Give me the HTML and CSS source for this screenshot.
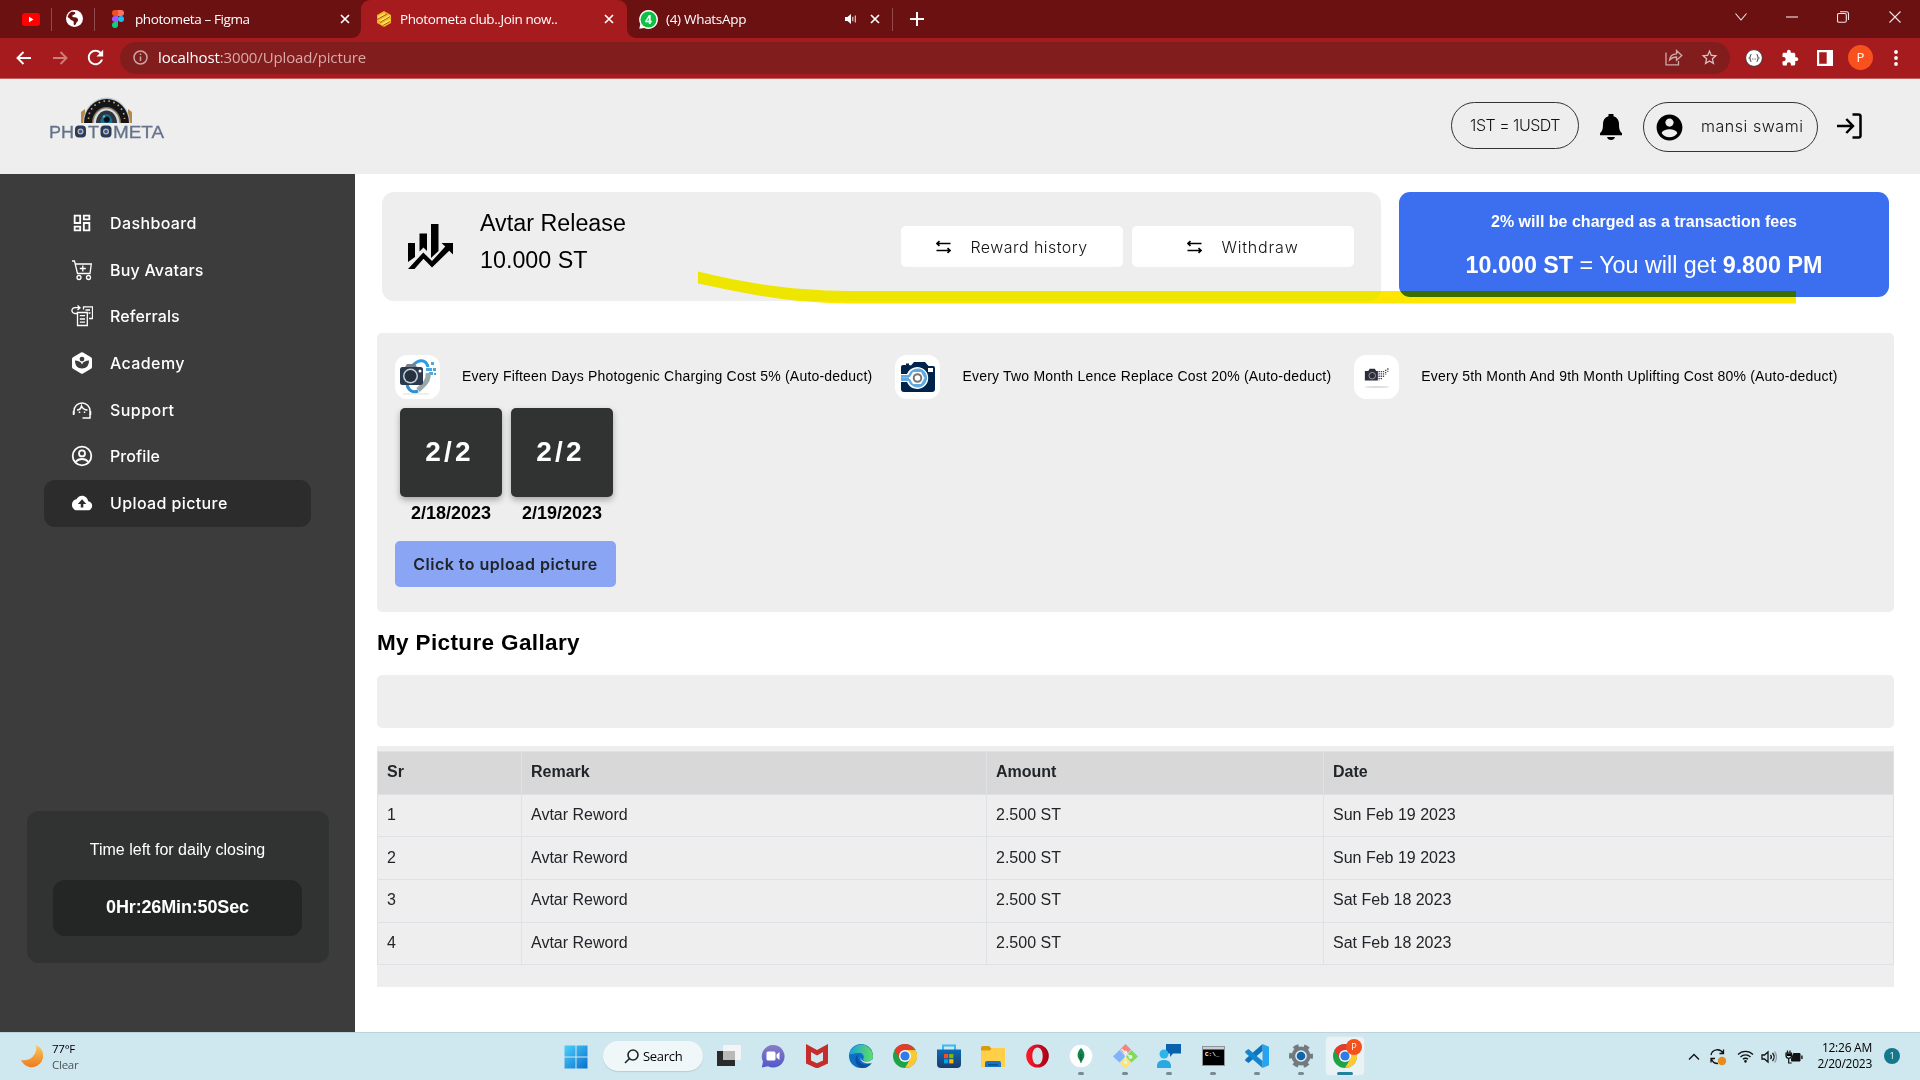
FILE: index.html
```
<!DOCTYPE html>
<html lang="en">
<head>
<meta charset="utf-8">
<title>Photometa club..Join now..</title>
<link rel="stylesheet" href="styles.css">
</head>
<body>
<div class="tabstrip">
  <div class="tabs-left">
    <svg class="pin-yt" width="18" height="13" viewBox="0 0 18 13"><rect width="18" height="13" rx="3" fill="#f00"/><path d="M7 3.8v5.4l4.600-2.700z" fill="#fff"/></svg>
    <i class="sep"></i>
    <svg class="pin-globe" width="17" height="17" viewBox="0 0 24 24"><circle cx="12" cy="12" r="12" fill="#fff"/><path d="M8 2.500c3 0 6 .5 5 2.500s-3.500 1.500-4 3 1 2 3.500 2.300 4.500 1.500 4.500 3.700-2 2.500-2.500 4.500-1.500 3-2.700 3-.8-3.500-1-5S7 14.500 6 13 3 11 2.500 10 5 3 8 2.500z" fill="#6c1112"/></svg>
    <i class="sep sep2"></i>
    <svg class="figma" width="12" height="18" viewBox="0 0 12 18"><path d="M3 0h3v6H3a3 3 0 0 1 0-6z" fill="#f24e1e"/><path d="M6 0h3a3 3 0 0 1 0 6H6z" fill="#ff7262"/><path d="M3 6h3v6H3a3 3 0 0 1 0-6z" fill="#a259ff"/><circle cx="9" cy="9" r="3" fill="#1abcfe"/><path d="M3 12h3v3a3 3 0 1 1-3-3z" fill="#0acf83"/></svg>
    <span class="tab-title t-figma">photometa – Figma</span>
    <svg class="tab-x" width="10" height="10" viewBox="0 0 10 10"><path d="M1 1l8 8M9 1L1 9"/></svg>
  </div>
  <div class="tab-active-wrap"><div class="tab-active">
    <svg width="14" height="16" viewBox="0 0 14 16"><path d="M7 0l7 4v8l-7 4-7-4V4z" fill="#f5b51e"/><path d="M1 5.500l6-3.200 2 1L1 8zM2 9.500l10-5.500 1 .6v2L4 11.500zM4 13l9-5v3l-6 3.500z" fill="#ffe259"/><path d="M0 8.500L10 3M3 11.500l10-5.800M6 14.500l7-4" stroke="#a8571c" stroke-width="1" fill="none"/></svg>
    <span class="tab-title t-photo">Photometa club..Join now..</span>
    <svg class="tab-x" width="10" height="10" viewBox="0 0 10 10"><path d="M1 1l8 8M9 1L1 9"/></svg>
  </div></div>
  <div class="tabs-right">
    <svg width="19" height="19" viewBox="0 0 19 19"><path d="M9.500 0a9.500 9.500 0 1 1-4.300 18L.3 18.700l1-4.600A9.500 9.500 0 0 1 9.500 0z" fill="#fff"/><circle cx="9.500" cy="9.500" r="8" fill="#0dc143"/><text x="9.500" y="14" font-size="12" font-weight="700" text-anchor="middle" fill="#fff">4</text></svg>
    <span class="tab-title t-wa">(4) WhatsApp</span>
    <svg class="speaker" width="12" height="12" viewBox="0 0 12 12"><path d="M0 4h2.500L6 1v10L2.500 8H0z" fill="#fff"/><path d="M7.800 3.800v4.400M10.300 2.500v7" stroke="#e2c7c7" stroke-width="1.200"/></svg>
    <svg class="tab-x" width="10" height="10" viewBox="0 0 10 10"><path d="M1 1l8 8M9 1L1 9"/></svg>
    <i class="sep sep3"></i>
    <svg class="plus" width="14" height="14" viewBox="0 0 14 14"><path d="M7 0v14M0 7h14" stroke="#fff" stroke-width="2"/></svg>
    <div class="win-controls">
      <svg width="12" height="8" viewBox="0 0 12 8"><path d="M.5.5L6 7l5.500-6.500"/></svg>
      <svg width="12" height="2" viewBox="0 0 12 2"><path d="M0 1h12"/></svg>
      <svg width="13" height="12" viewBox="0 0 13 12"><rect x=".5" y="2.500" width="8.800" height="8.800" rx="1.500"/><path d="M3 .7h6.500a2 2 0 0 1 2 2V9"/></svg>
      <svg width="12" height="12" viewBox="0 0 12 12"><path d="M.5.5l11 11M11.500.5l-11 11"/></svg>
    </div>
  </div>
</div>

<div class="toolbar">
  <svg class="nav-ic" width="16" height="14" viewBox="0 0 16 14"><path d="M15 7H1.500M7.500 1L1.500 7l6 6"/></svg>
  <svg class="nav-ic fwd" width="16" height="14" viewBox="0 0 16 14"><path d="M1 7h13.500M8.500 1l6 6-6 6"/></svg>
  <svg class="reload" width="23" height="23" viewBox="0 0 24 24"><path fill="#fff" d="M17.650 6.350C16.200 4.900 14.210 4 12 4c-4.420 0-7.990 3.580-7.990 8s3.570 8 7.990 8c3.730 0 6.840-2.550 7.730-6h-2.080c-.82 2.330-3.040 4-5.650 4-3.310 0-6-2.690-6-6s2.690-6 6-6c1.660 0 3.140.69 4.220 1.780L13 11h7V4l-2.350 2.350z"/></svg>
  <div class="urlbar">
    <svg width="15" height="15" viewBox="0 0 15 15" fill="none" stroke="#c9a5a5" stroke-width="1.500"><circle cx="7.500" cy="7.500" r="6.500"/><path d="M7.500 6.500v4.500M7.500 3.500v1.600"/></svg>
    <span class="url"><b>localhost</b>:3000/Upload/picture</span>
    <svg class="share" width="18" height="17" viewBox="0 0 18 17" fill="none" stroke="#cfa9a9" stroke-width="1.300"><path d="M1 3.500v12.300h12.500V12"/><path d="M4.500 11c.5-4 3-6 7-6.200V1.500l5.300 5-5.300 4.800V8c-3 0-5 .8-7 3z"/></svg>
    <svg width="19" height="19" viewBox="0 0 24 24"><path fill="#dcbfbf" d="M22 9.240l-7.190-.62L12 2 9.190 8.630 2 9.240l5.460 4.730L5.820 21 12 17.270 18.180 21l-1.630-7.030L22 9.240zM12 15.400l-3.760 2.270 1-4.280-3.320-2.880 4.380-.38L12 6.100l1.710 4.040 4.380.38-3.320 2.880 1 4.280L12 15.400z"/></svg>
  </div>
  <div class="extensions">
    <svg width="18" height="18" viewBox="0 0 18 18"><circle cx="9" cy="9" r="8.400" fill="#fff" stroke="#4a3030"/><path d="M6.500 5.500c-2 0-.5 3-2 3.500 1.500.5 0 3.500 2 3.500M11.500 5.500c2 0 .5 3 2 3.500-1.500.5 0 3.500-2 3.500" fill="none" stroke="#555" stroke-width="1.200"/><path d="M7 10h4" stroke="#777" stroke-dasharray="1 .5"/></svg>
    <svg width="18" height="18" viewBox="0 0 24 24"><path fill="#fff" d="M20.500 11H19V7c0-1.100-.9-2-2-2h-4V3.500C13 2.120 11.880 1 10.500 1S8 2.120 8 3.500V5H4c-1.100 0-1.990.9-1.990 2v3.800H3.500c1.490 0 2.700 1.210 2.700 2.700s-1.210 2.700-2.700 2.700H2V20c0 1.100.9 2 2 2h3.800v-1.500c0-1.490 1.210-2.700 2.700-2.700 1.490 0 2.700 1.210 2.700 2.700V22H17c1.100 0 2-.9 2-2v-4h1.500c1.380 0 2.500-1.120 2.500-2.500S21.880 11 20.500 11z"/></svg>
    <svg width="16" height="16" viewBox="0 0 16 16"><path fill="#fff" d="M0 0h16v16H0zM2.200 2.200v11.600h7.500V2.200z" fill-rule="evenodd"/></svg>
    <span class="avatar-p">P</span>
    <svg class="dots" width="4" height="16" viewBox="0 0 4 16" fill="#fff"><circle cx="2" cy="2" r="1.900"/><circle cx="2" cy="8" r="1.900"/><circle cx="2" cy="14" r="1.900"/></svg>
  </div>
</div>

<header class="site-header">
  <svg class="logo" width="118" height="44" viewBox="0 0 118 44">
    <path d="M32 27V16l4-3v14zM83 27V16l-4-3v14z" fill="#b98a45"/>
    <path d="M34 27a23.500 25.500 0 0 1 47 0z" fill="#b9c6da"/>
    <path d="M35 27a22.500 24 0 0 1 45 0z" fill="#14151a"/>
    <path d="M39.500 23a18 18 0 0 1 36 0" fill="none" stroke="#e0a83e" stroke-width="1.600" stroke-dasharray="1.600 3.400"/>
    <path d="M43 27a14.500 16 0 0 1 29 0z" fill="#8a7a5c"/>
    <path d="M44.500 27a13 14.500 0 0 1 26 0z" fill="#d6dbe4"/>
    <path d="M47 27a10.500 12.500 0 0 1 21 0z" fill="#30343c"/>
    <path d="M51.500 27a6 9 0 0 1 12 0z" fill="#1b6f8f"/><circle cx="57.700" cy="23.500" r="3" fill="#06131c"/><circle cx="55" cy="20.500" r="1.200" fill="#5fb3cb"/>
    <g class="logo-text"><text x="0" y="41.500" textLength="25" lengthAdjust="spacingAndGlyphs">PH</text><text x="39" y="41.500" textLength="11" lengthAdjust="spacingAndGlyphs">T</text><text x="64" y="41.500" textLength="51" lengthAdjust="spacingAndGlyphs">META</text></g>
    <g><rect x="26" y="29.500" width="11" height="12" rx="4" fill="#2c3a57"/><circle cx="31.500" cy="35.500" r="3" fill="#c7b9a0"/><circle cx="31.500" cy="35.500" r="1.700" fill="#2a5cae"/></g>
    <g><rect x="51.500" y="29.500" width="11" height="12" rx="4" fill="#2c3a57"/><circle cx="57" cy="35.500" r="3" fill="#c7b9a0"/><circle cx="57" cy="35.500" r="1.700" fill="#2a5cae"/></g>
  </svg>
  <div class="header-right">
    <span class="pill rate">1ST = 1USDT</span>
    <svg class="bell" width="22" height="26" viewBox="0 0 22 26"><path d="M8.500 0h5v2.300c3.600 1 5.500 4 5.500 7.700 0 5 .8 7.500 3 9v2.300H0V19c2.200-1.500 3-4 3-9 0-3.700 1.900-6.700 5.500-7.700zM7 23h8c-.5 2-2 3-4 3s-3.500-1-4-3z"/></svg>
    <span class="pill user"><svg width="31" height="31" viewBox="0 0 24 24"><path d="M12 2C6.480 2 2 6.480 2 12s4.480 10 10 10 10-4.480 10-10S17.520 2 12 2zm0 3c1.660 0 3.200 1.500 3.200 3.200S13.660 11.400 12 11.400 8.800 9.900 8.800 8.200 10.340 5 12 5zm0 14.600c-2.500 0-4.710-1.280-6-3.220.03-1.990 4-3.080 6-3.080 1.990 0 5.970 1.090 6 3.080-1.290 1.940-3.500 3.220-6 3.220z"/></svg><span>mansi swami</span></span>
    <svg class="logout" width="25" height="26" viewBox="0 0 25 26" fill="none" stroke="#000" stroke-width="2.500"><path d="M0 13h15.500M9.300 6l6.700 7-6.700 7M15.500 1.500h6a2 2 0 0 1 2 2v19a2 2 0 0 1-2 2h-6"/></svg>
  </div>
</header>

<main class="layout">
  <aside class="sidebar">
    <nav>
      <a class="item"><svg viewBox="0 0 24 24"><path d="M19 5v2h-4V5h4M9 5v6H5V5h4m10 8v6h-4v-6h4M9 17v2H5v-2h4M21 3h-8v6h8V3zM11 3H3v10h8V3zm10 8h-8v10h8V11zm-10 4H3v6h8v-6z"/></svg><span class="n1">Dashboard</span></a>
      <a class="item"><svg viewBox="0 0 22 22" class="line"><path d="M1 2h2.500l3 12.500H19L20.300 5H4.500M11.800 6.500v6M8.800 9.500h6"/><circle cx="8" cy="18.500" r="2"/><circle cx="17.500" cy="18.500" r="2"/></svg><span class="n2">Buy Avatars</span></a>
      <a class="item"><svg viewBox="0 0 22 22" class="line"><path d="M6 8.500H3.800a2.900 2.900 0 0 1 0-5.800H8.500M6.500.5L9 2.700 6.500 5M12.500 4.500V1.800h9v11.700H18M14.500 5h4.500M17.500 8h2M6.500 7.500h9.800v13H6.500zM8.800 10.700h5.200M8.800 14h5.200M8.800 17.200h5.200"/></svg><span class="n3">Referrals</span></a>
      <a class="item"><svg viewBox="0 0 22 22"><path fill-rule="evenodd" d="M10 .6q1-.6 2 0l8 4.700q1 .5 1 1.700v8q0 1.200-1 1.700l-8 4.700q-1 .6-2 0l-8-4.700q-1-.5-1-1.700V7q0-1.200 1-1.700zM11 4.700a2.400 2.400 0 1 0 0 4.800 2.400 2.400 0 0 0 0-4.800zM4 8.500c0 5 2.500 8 7 8s7-3 7-8c-3 0-6 1-7 4-1-3-4-4-7-4z"/></svg><span class="n1">Academy</span></a>
      <a class="item"><svg viewBox="0 0 22 22" class="line bold"><path d="M3 15.500v-3.500a8 8 0 0 1 16 0v7h-7.500M2.500 12v4M19.500 12v4M6 11c3 0 4-1.500 4.500-4 1.200 2.700 3 4 6 4"/><path d="M8.500 12.500v1.500M13.500 12.500v1.500"/></svg><span class="n5">Support</span></a>
      <a class="item"><svg viewBox="0 0 22 22" class="line"><circle cx="11" cy="11" r="9.300" stroke-width="1.800"/><circle cx="11" cy="8.400" r="3" stroke-width="1.800"/><path stroke-width="1.800" d="M4.500 17c2-2.500 4-3 6.500-3s4.500.5 6.500 3"/></svg><span class="n3">Profile</span></a>
      <a class="item active"><svg viewBox="0 0 24 24"><path d="M19.350 10.040C18.670 6.590 15.640 4 12 4 9.110 4 6.600 5.640 5.350 8.040 2.340 8.360 0 10.910 0 14c0 3.310 2.690 6 6 6h13c2.760 0 5-2.240 5-5 0-2.640-2.050-4.780-4.650-4.960zM13.500 13v4h-3v-4H7l5-5 5 5z" transform="translate(1 0) scale(.92 1)"/></svg><span class="n1">Upload picture</span></a>
    </nav>
    <div class="timer"><p>Time left for daily closing</p><strong>0Hr:26Min:50Sec</strong></div>
  </aside>

  <section class="content">
    <div class="top-row">
      <div class="card-release">
        <svg class="growth" width="45" height="45" viewBox="0 0 45 45"><path d="M0 19h7v14L0 38zM11.500 9.500h7.500v17.500l-3.500-3.500-4 4zM23 0h7.500v27l-7.500 7z"/><path d="M33.500 19H45v11.500l-3.800-3.800L24 43.500l-8.500-8.800L6.500 45H0l15.300-16.500 8.700 8.600 13.300-14.500z"/></svg>
        <div class="release-text"><span>Avtar Release</span><span>10.000 ST</span></div>
        <div class="actions">
          <a class="act"><svg width="15" height="14" viewBox="0 0 15 14"><path d="M14.500 3.500H1M3.500 1.200L1 3.500l2.500 2.300M.5 10.500H14M11.500 8.200l2.500 2.300-2.500 2.300"/></svg><span class="rh">Reward history</span></a>
          <a class="act"><svg width="15" height="14" viewBox="0 0 15 14"><path d="M14.500 3.500H1M3.500 1.200L1 3.500l2.500 2.300M.5 10.500H14M11.500 8.200l2.500 2.300-2.500 2.300"/></svg><span class="wd">Withdraw</span></a>
        </div>
      </div>
      <div class="card-fee"><p class="fee-note">2% will be charged as a transaction fees</p><p class="fee-sum"><b>10.000 ST</b> = You will get <b>9.800 PM</b></p></div>
      <svg class="marker" width="1100" height="40" viewBox="0 0 1100 40"><path d="M0 1.500C45 12 90 21 152 21H1098V33.500H152C90 33 50 24 0 13.500z" fill="#ffe600"/></svg>
    </div>

    <div class="panel">
      <div class="notices">
        <div class="notice">
          <span class="thumb"><svg width="38" height="36" viewBox="0 0 38 36"><path d="M14 6C20 0 27 0 29 8" fill="none" stroke="#2f9be0" stroke-width="3"/><path d="M27 9h6v3h-6zM32 3h3v3h-3zM34 9h3v3h-3zM30 13h4v3h-4zM35 14h2v2h-2z" fill="#4aa7e0"/><path d="M29 14c1 7-3 11-10 17" fill="none" stroke="#97a9a8" stroke-width="5"/><path d="M8 26c2 6 6 8 11 6" fill="none" stroke="#2d8fd0" stroke-width="3"/><rect x="1" y="8" width="23" height="18" rx="2.500" fill="#2c3a50"/><path d="M6 8l2-3h8l2 3z" fill="#75828e"/><circle cx="11.500" cy="17" r="7.500" fill="#c8d0d5"/><circle cx="11.500" cy="17" r="6" fill="#253140"/><circle cx="21" cy="12" r="1.500" fill="#fff"/><path d="M4 35h26" stroke="#ddd"/></svg></span>
          <p>Every Fifteen Days Photogenic Charging Cost 5% (Auto-deduct)</p>
        </div>
        <div class="notice">
          <span class="thumb"><svg width="34" height="30" viewBox="0 0 34 30"><path d="M2 3h3V1.500h3V3l2 .5L13 0h11l3.500 4H32q2 0 2 2v21q0 3-3 3H3q-3 0-3-3V5q0-2 2-2z" fill="#00234b"/><path d="M27 6h5v4h-5z" fill="#fff"/><path d="M0 12h6a11 11 0 1 1 0 8H0z" fill="#fff"/><path d="M0 13h7.500A9.500 9.500 0 1 1 7.500 19H0z" fill="#62a9df"/><path d="M0 15h9l3-5h8l3.500 6-3.500 6h-8l-3-5H0z" fill="#fff"/><path d="M0 15.200h8v1.800H0z" fill="#62a9df"/><circle cx="16.500" cy="16" r="3.800" fill="#fff" stroke="#777" stroke-width="2"/></svg></span>
          <p>Every Two Month Lence Replace Cost 20% (Auto-deduct)</p>
        </div>
        <div class="notice">
          <span class="thumb"><svg width="26" height="24" viewBox="0 0 30 26"><path d="M1 6h4l1.500-2.500h6L14 6h2v11H1z" fill="#2c2c3a"/><circle cx="9.500" cy="11.500" r="3.800" fill="#2c2c3a" stroke="#aaa" stroke-width="1"/><path d="M17.500 6v11M20 6v10M22.500 6v8M25 4.500v6M27.500 3v4" stroke="#3a3a48" stroke-width="1.500" stroke-dasharray="1.500 1.200"/><ellipse cx="15" cy="24.500" rx="14" ry="1.200" fill="#ddd"/></svg></span>
          <p>Every 5th Month And 9th Month Uplifting Cost 80% (Auto-deduct)</p>
        </div>
      </div>
      <div class="days">
        <div class="day"><div class="count">2/2</div><span>2/18/2023</span></div>
        <div class="day"><div class="count">2/2</div><span>2/19/2023</span></div>
      </div>
      <a class="upload">Click to upload picture</a>
    </div>

    <h2>My Picture Gallary</h2>
    <div class="gallery"></div>

    <div class="table-wrap">
      <table>
        <colgroup><col class="c1"><col class="c2"><col class="c3"><col></colgroup>
        <thead><tr><th>Sr</th><th>Remark</th><th>Amount</th><th>Date</th></tr></thead>
        <tbody>
          <tr><td>1</td><td>Avtar Reword</td><td>2.500 ST</td><td>Sun Feb 19 2023</td></tr>
          <tr><td>2</td><td>Avtar Reword</td><td>2.500 ST</td><td>Sun Feb 19 2023</td></tr>
          <tr><td>3</td><td>Avtar Reword</td><td>2.500 ST</td><td>Sat Feb 18 2023</td></tr>
          <tr><td>4</td><td>Avtar Reword</td><td>2.500 ST</td><td>Sat Feb 18 2023</td></tr>
        </tbody>
      </table>
    </div>
  </section>
</main>

<footer class="taskbar">
  <svg width="0" height="0" class="defs"><defs>
    <linearGradient id="moon" x1="0" y1="0" x2="0" y2="1"><stop offset="0" stop-color="#f8c95c"/><stop offset="1" stop-color="#f07a1c"/></linearGradient>
    <linearGradient id="win" x1="0" y1="0" x2="1" y2="1"><stop offset="0" stop-color="#4cd0fa"/><stop offset="1" stop-color="#0a6fd0"/></linearGradient>
    <linearGradient id="chat" x1="0" y1="0" x2="0" y2="1"><stop offset="0" stop-color="#8a7cc8"/><stop offset="1" stop-color="#5059c9"/></linearGradient>
    <linearGradient id="edge" x1="0" y1="0" x2="1" y2="0"><stop offset="0" stop-color="#1a9fe0"/><stop offset="1" stop-color="#5fe05f"/></linearGradient>
    <linearGradient id="store" x1="0" y1="0" x2="0" y2="1"><stop offset="0" stop-color="#0a6bb8"/><stop offset="1" stop-color="#1c3a6b"/></linearGradient>
    <linearGradient id="opera" x1="0" y1="0" x2="1" y2="0"><stop offset="0" stop-color="#ff1b2d"/><stop offset="1" stop-color="#a70014"/></linearGradient>
    <symbol id="chrome" viewBox="0 0 24 24"><circle cx="12" cy="12" r="12" fill="#1ea446"/><path d="M1.600 6A12 12 0 0 1 22.400 6H12L6.800 15z" fill="#e33b2e"/><path d="M22.400 6A12 12 0 0 1 12 24l5.200-9L12 6z" fill="#fcc934"/><circle cx="12" cy="12" r="6" fill="#fff"/><circle cx="12" cy="12" r="4.600" fill="#2f7bea"/></symbol>
  </defs></svg>
  <div class="weather"><svg width="23" height="23" viewBox="0 0 23 23"><path d="M15 0a11.500 11.500 0 1 1-15 15A12.500 12.500 0 0 0 15 0z" fill="url(#moon)"/></svg><div><span class="temp">77°F</span><span class="cond">Clear</span></div></div>
  <svg class="start" width="24" height="24" viewBox="0 0 24 24" fill="url(#win)"><path d="M1 .5h10.500V11.500H.5V1zM12.500.5H23.500V11.500H12.500zM.5 12.500h11v11H.5zM12.500 12.500h11v11h-11z"/></svg>
  <div class="search"><svg width="15" height="15" viewBox="0 0 15 15" fill="none" stroke="#222" stroke-width="1.600"><circle cx="9" cy="6" r="5"/><path d="M5.500 9.500L1 14"/></svg><span>Search</span></div>
  <div class="apps">
    <span><svg width="24" height="24" viewBox="0 0 24 24"><path d="M0 7h18v15H0z" fill="#2a2a2a"/><path d="M6 1h18v15H6z" fill="#f4f4f4"/><path d="M6 7h12v9H6z" fill="#b9b9b9"/></svg></span>
    <span><svg width="24" height="24" viewBox="0 0 24 24"><path d="M12 1a11.300 11.300 0 1 1-5 21.300L.8 23.500 2 17.500A11.300 11.300 0 0 1 12 1z" fill="url(#chat)"/><rect x="5.500" y="7.500" width="9" height="9" rx="1.500" fill="#fff"/><path d="M15.500 10.500l3-2.500v8l-3-2.500z" fill="#fff"/></svg></span>
    <span><svg width="22" height="24" viewBox="0 0 22 24"><path d="M0 0l11 6 11-6v19.500L11 24.500 0 19.500zM5 8v8.500l6 2.800 6-2.800V8l-6 3.500z" fill="#c52c2c" fill-rule="evenodd"/></svg></span>
    <span><svg width="24" height="24" viewBox="0 0 24 24"><circle cx="12" cy="12" r="12" fill="#0c6fc4"/><path d="M.2 10.500A12 12 0 0 1 24 12c0 4-3 5.300-6 5.300-2.500 0-4-1-4-2 1.500-1.500 1.200-6.300-4-6.300-5 0-8 2-9.800 1.500z" fill="url(#edge)"/><path d="M9 10c-2 5 2 11 9 10.500 2 0 3.800-1 5-2-3 5-7 5.800-10.500 5.400C7 23 4 14 9 10z" fill="#0d4f9e"/><path d="M13 9.500c-2 1.500-2.500 4.500 0 6.500 3 2.500 7.500 2 11-1l-1 3.500c-4 2-9 1-11-2.500-1.500-3-.5-5.500 1-6.500z" fill="#cfe7ee"/></svg></span>
    <span><svg width="24" height="24"><use href="#chrome"/></svg></span>
    <span><svg width="24" height="24" viewBox="0 0 24 24"><path d="M6 6V1.500h12V6" fill="none" stroke="#34bdf3" stroke-width="2"/><path d="M0 5.500h24V20q0 4-4 4H4q-4 0-4-4z" fill="url(#store)"/><path d="M7 10h4.200v4.200H7z" fill="#f25022"/><path d="M12.200 10h4.200v4.200h-4.200z" fill="#7fba00"/><path d="M7 15.200h4.200v4.200H7z" fill="#00a4ef"/><path d="M12.200 15.200h4.200v4.200h-4.200z" fill="#ffb900"/></svg></span>
    <span><svg width="24" height="24" viewBox="0 0 24 24"><path d="M0 4q0-2 2-2h6l3 3v4H0z" fill="#d99a10"/><path d="M0 6.500h9L11 4h13v19H0z" fill="#ffcf48"/><path d="M4 23v-4q0-2 2-2h12q2 0 2 2v4z" fill="#1673c6"/><path d="M7 20h10v1.500H7z" fill="#0c4f92"/></svg></span>
    <span><svg width="23" height="24" viewBox="0 0 23 24"><path fill-rule="evenodd" d="M11.500.5a11.300 11.500 0 1 1 0 23 11.300 11.500 0 0 1 0-23zm0 3C8.500 3.500 6.300 7 6.300 12s2.200 8.500 5.200 8.500 5.200-3.500 5.200-8.500-2.200-8.500-5.200-8.500z" fill="url(#opera)"/></svg></span>
    <span class="run"><svg width="24" height="24" viewBox="0 0 24 24"><circle cx="12" cy="12" r="11.300" fill="#fff"/><path d="M12 4c5 5 4 10 0 14-4-4-5-9 0-14z" fill="#10864a"/><path d="M12 10v9" stroke="#0b5c34"/></svg></span>
    <span class="run"><svg width="25" height="25" viewBox="0 0 25 25"><path d="M12.500 0l5.500 5.500-5.500 6L7 5.500z" fill="#f8827f"/><path d="M6.500 6l6 6.500-6 6L0 12.500z" fill="#80b3ff"/><path d="M18.500 6l6.500 6.500-6.500 6-6-6z" fill="#80db55"/><path d="M12.500 13l5.500 6-5.500 6L7 19z" fill="#ffe36a"/><path d="M8.500 5l4 4v10M12.500 9l5 4" stroke="#e6eef0" stroke-width="1.500" fill="none"/><g fill="#e6eef0"><circle cx="12.500" cy="8.500" r="2"/><circle cx="17.500" cy="13" r="2"/><circle cx="12.500" cy="18.500" r="2"/></g></svg></span>
    <span class="run"><svg width="24" height="24" viewBox="0 0 24 24"><path d="M9 0h15v9.500h-8l-3 3.500V9.500H9z" fill="#0862ae"/><circle cx="7" cy="10" r="4.500" fill="#2fb4ea"/><path d="M0 24v-2c0-4 3-6 7-6s7 2 7 6v2z" fill="#2aa8e2"/></svg></span>
    <span class="run"><svg class="console" width="23" height="20" viewBox="0 0 23 20"><rect x=".5" y=".5" width="22" height="19" fill="#000" stroke="#8e9599"/><path d="M1 1h21v2.500H1z" fill="#c9ced0"/><text x="3" y="9.500" class="cmd">C:\_</text></svg></span>
    <span class="run"><svg width="24" height="24" viewBox="0 0 24 24"><path d="M17.500 0L24 2.800v18.400L17.500 24z" fill="#27a4ee"/><path d="M17.500 0v7L3.500 19 .3 16.800v-1.600z" fill="#0f72bd"/><path d="M17.500 24v-7L3.500 5 .3 7.200v1.600z" fill="#1585d0"/></svg></span>
    <span class="run"><svg width="24" height="24" viewBox="0 0 24 24"><circle cx="12" cy="12" r="9.500" fill="#727a80"/><circle cx="12" cy="12" r="10" fill="none" stroke="#727a80" stroke-width="4" stroke-dasharray="5.200 5.270" stroke-dashoffset="2.600"/><circle cx="12" cy="12" r="5.800" fill="#e8edf0"/><circle cx="12" cy="12" r="4.300" fill="#0f65b0"/></svg></span>
    <span class="current"><svg width="24" height="24"><use href="#chrome"/></svg><b>P</b></span>
  </div>
  <div class="tray">
    <svg width="12" height="8" viewBox="0 0 12 8" class="tl"><path d="M1 6.500l5-5 5 5"/></svg>
    <svg class="sync" width="18" height="18" viewBox="0 0 18 18"><path class="st" d="M2 7a6.500 6.500 0 0 1 12-2M14.500 1.500V5.500h-4M9 15.500A6.500 6.500 0 0 1 2.500 11M2 14.500v-4h4"/><circle cx="13" cy="13" r="4.200" fill="#e88a1c"/></svg>
    <svg class="wifi tl" width="17" height="13" viewBox="0 0 17 13"><path d="M1 4.500a10.500 10.500 0 0 1 15 0M3.500 7a7 7 0 0 1 10 0M6 9.300a3.500 3.500 0 0 1 5 0"/><circle cx="8.500" cy="11.300" r=".7"/></svg>
    <svg class="vol tl" width="16" height="14" viewBox="0 0 16 14"><path d="M1 5h2.500L7 2v10L3.500 9H1zM9.500 5a3 3 0 0 1 0 4M11.500 3a6 6 0 0 1 0 8"/><path d="M13.500 1.500a8.500 8.500 0 0 1 0 11" stroke="#8fa0a6"/></svg>
    <svg class="bat" width="18" height="14" viewBox="0 0 18 14"><path d="M8.500 3.500h6.500v7.500H6.500V9z" fill="#111" stroke="#111"/><path d="M16.300 5.500h1.300v3.500h-1.300z"/><path d="M1 3h5.500v2.500a2.700 2.700 0 0 1-5.500 0zM2.500.5V3M5 .5V3M3.700 8v5h3" fill="none" stroke="#111" stroke-width="1.200"/><path d="M1.500 3.500h4.500v2.500H1.500z"/></svg>
    <div class="clock"><span>12:26 AM</span><span>2/20/2023</span></div>
    <b class="badge">1</b>
  </div>
</footer>
</body>
</html>
```
FILE: styles.css
```
* { box-sizing: border-box; }
body {
  margin: 0;
  width: 1920px;
  height: 1080px;
  overflow: hidden;
  display: flex;
  flex-direction: column;
  background: #fff;
  font-family: "Liberation Sans", Arial, sans-serif;
  color: #000;
}
p, h2 { margin: 0; }
svg { display: block; flex: none; }

/* browser tabs */
.tabstrip {
  height: 38px;
  display: flex;
  background: #a61b1d;
  font-family: "Open Sans", sans-serif;
  color: #fff;
}
.tabs-left, .tabs-right, .tab-active, .tab-active-wrap { display: flex; align-items: center; }
.tabs-left {
  width: 361px;
  padding-left: 22px;
  background: #6c1112;
  border-bottom-right-radius: 9px;
}
.sep { width: 1px; height: 23px; background: #94494a; margin: 0 14px 0 11px; }
.pin-globe { margin-top: -1px; }
.sep2 { margin: 0 17px 0 11px; }
.tab-title { font-size: 13.5px; white-space: pre; margin-top: -1px; }
.t-figma { width: 216px; padding-left: 11px; letter-spacing: -.4px; }
.tab-x { fill: none; stroke: #fff; stroke-width: 1.7; }
.tab-active-wrap { width: 266px; background: #6c1112; align-items: stretch; }
.tab-active {
  flex: 1;
  padding-left: 16px;
  background: #a61b1d;
  border-radius: 9px 9px 0 0;
}
.t-photo { width: 213px; padding-left: 9px; letter-spacing: -.4px; }
.tabs-right {
  flex: 1;
  padding-left: 12px;
  background: #6c1112;
  border-bottom-left-radius: 9px;
}
.t-wa { width: 187px; padding-left: 8px; letter-spacing: -.3px; }
.speaker { margin-right: 13px; }
.sep3 { margin: 0 17px 0 12px; }
.win-controls {
  margin: -5px 19px 0 auto;
  display: flex;
  align-items: center;
  gap: 39px;
  fill: none;
  stroke: #f3e5e5;
  stroke-width: 1.1;
}

/* address bar */
.toolbar {
  height: 41px;
  display: flex;
  align-items: center;
  padding: 0 22px 1px 16px;
  background: #a61b1d;
  border-bottom: 1px solid #c4605f;
  font-family: "Open Sans", sans-serif;
}
.nav-ic { fill: none; stroke: #fff; stroke-width: 1.9; margin-right: 20px; }
.nav-ic.fwd { stroke: #d27c7c; margin-right: 16px; }
.reload { margin-right: 13px; }
.urlbar {
  width: 1610px;
  height: 32px;
  border-radius: 16px;
  background: #821d1e;
  display: flex;
  align-items: center;
  padding: 0 11px 0 13px;
}
.url { flex: 1; padding-left: 10px; font-size: 15px; letter-spacing: -.13px; color: #dba9a9; margin-top: -1px; }
.url b { font-weight: 400; color: #fff; }
.share { margin-right: 17px; }
.extensions { flex: 1; display: flex; align-items: center; gap: 18px; padding-left: 15px; }
.avatar-p {
  width: 25px;
  height: 25px;
  margin-left: -3px;
  border-radius: 50%;
  background: #f8511d;
  color: #fff;
  font-size: 13px;
  line-height: 25px;
  text-align: center;
}
.dots { margin-left: auto; }

/* site header */
.site-header {
  height: 95px;
  background: #eee;
  display: flex;
  align-items: flex-start;
  padding: 17px 58px 0 49px;
}
.logo-text { font: 17px "Liberation Sans", sans-serif; fill: #65738a; stroke: #65738a; stroke-width: .3; }
.header-right { margin-left: auto; display: flex; align-items: flex-start; font-family: Inter, sans-serif; font-weight: 300; padding-top: 6px; }
.pill { display: flex; align-items: center; border: 1px solid #333; border-radius: 26px; font-size: 16px; color: #111; }
.rate { width: 128px; height: 47px; justify-content: center; letter-spacing: -.5px; padding-bottom: 1px; margin-right: 21px; }
.bell { margin: 12px 21px 0 0; }
.user { width: 175px; height: 50px; padding-left: 10px; gap: 16px; letter-spacing: .55px; margin-right: 19px; }
.user span { margin-top: -3px; }
.logout { margin-top: 11px; }

/* body */
.layout { height: 858px; display: flex; }
.sidebar { width: 355px; background: #3b3c3b; padding: 26px 26px 0 27px; display: flex; flex-direction: column; }
.sidebar nav { display: flex; flex-direction: column; padding: 0 18px 0 17px; }
.item {
  height: 46.7px;
  display: flex;
  align-items: center;
  padding: 0 0 1px 27px;
  gap: 17px;
  font: 500 16px Inter, sans-serif;
  color: #fff;
}
.item svg { width: 22px; height: 22px; fill: #fff; }
.item svg.line { fill: none; stroke: #fff; stroke-width: 1.3; }
.item svg.bold { stroke-width: 1.5; }
.item.active { background: #2c2c2c; border-radius: 11px; }
.n1 { letter-spacing: .38px; }
.n2 { letter-spacing: .2px; }
.n3 { letter-spacing: .1px; }
.n5 { letter-spacing: .45px; }
.timer {
  margin-top: 284px;
  height: 152px;
  border-radius: 12px;
  background: #313232;
  padding: 29px 27px 0 26px;
  text-align: center;
  color: #fff;
}
.timer p { font-size: 16px; line-height: 20px; margin-bottom: 20px; }
.timer strong {
  display: block;
  height: 56px;
  line-height: 55px;
  border-radius: 12px;
  background: #242625;
  font-size: 18px;
  letter-spacing: -.15px;
}
.content { flex: 1; padding: 18px 26px 0 22px; }
.top-row { display: flex; align-items: flex-start; gap: 18px; padding-left: 5px; position: relative; }
.card-release { width: 999px; height: 109px; border-radius: 12px; background: #eee; display: flex; padding-left: 26px; }
.growth { margin-top: 32px; }
.release-text { display: flex; flex-direction: column; padding: 13px 0 0 27px; font-size: 23.3px; line-height: 37px; }
.actions { margin: 34px 27px 0 auto; display: flex; gap: 9px; }
.act {
  width: 222px;
  height: 41px;
  border-radius: 5px;
  background: #fff;
  display: flex;
  align-items: center;
  justify-content: center;
  gap: 19px;
  font: 300 16px Inter, sans-serif;
  color: #111;
}
.act svg { fill: none; stroke: #000; stroke-width: 1.6; }
.rh { letter-spacing: .45px; }
.wd { letter-spacing: .8px; }
.card-fee { width: 490px; height: 105px; border-radius: 11px; background: #3b6ff0; color: #fff; text-align: center; }
.fee-note { font-size: 16px; font-weight: 700; line-height: 20px; padding-top: 20px; }
.fee-sum { font-size: 23.3px; line-height: 30px; padding-top: 18px; }
.marker { position: absolute; left: 321px; top: 78px; mix-blend-mode: darken; }
.panel { margin-top: 32px; height: 279px; border-radius: 5px; background: #eee; padding: 22px 18px 0; }
.notices { display: flex; gap: 23px; }
.notice { display: flex; align-items: center; gap: 22px; font-size: 14px; letter-spacing: .2px; white-space: nowrap; }
.notice p { margin-top: -2px; }
.thumb { width: 45px; height: 44px; border-radius: 12px; background: #fff; display: flex; align-items: center; justify-content: center; }
.days { display: flex; gap: 9px; padding: 9px 5px 0; }
.day { width: 102px; font-weight: 700; font-size: 18px; text-align: center; }
.count {
  height: 89px;
  line-height: 87px;
  border-radius: 5px;
  background: #313333;
  color: #fff;
  font-size: 28px;
  letter-spacing: 3.2px;
  padding-right: 3px;
  box-shadow: 0 3px 6px rgba(0, 0, 0, .3);
  margin-bottom: 5px;
}
.day span { display: block; line-height: 22px; }
.upload {
  display: flex;
  align-items: center;
  justify-content: center;
  width: 221px;
  height: 46px;
  margin-top: 17px;
  border-radius: 5px;
  background: #89a5f3;
  color: #212529;
  font: 600 16px Inter, sans-serif;
  letter-spacing: .48px;
}
h2 { font-size: 22.5px; line-height: 28px; letter-spacing: .37px; margin: 17px 0 18px; }
.gallery { height: 53px; border-radius: 5px; background: #eee; }
.table-wrap { margin-top: 18px; height: 241px; background: #eee; padding-top: 5px; }
table { width: 100%; table-layout: fixed; border-collapse: collapse; font-size: 16px; color: #212529; }
.c1 { width: 144px; }
.c2 { width: 465px; }
.c3 { width: 337px; }
th, td { height: 42.7px; padding: 0 9px 1px; text-align: left; border: 1px solid #dee2e6; }
th { background: #d8d8d8; }

/* taskbar */
.taskbar {
  height: 48px;
  display: flex;
  align-items: flex-start;
  background: #cfe7ee;
  border-top: 1px solid #bcd3da;
  font-family: "Open Sans", sans-serif;
}
.defs { position: absolute; }
.weather { width: 564px; display: flex; gap: 8px; padding: 12px 0 0 21px; font-size: 11.5px; line-height: 16px; letter-spacing: -.25px; }
.weather div { display: flex; flex-direction: column; margin-top: -4px; }
.cond { color: #4c5558; }
.start { margin: 12px 15px 0 0; }
.search {
  width: 100px;
  height: 30px;
  margin: 8px 4px 0 0;
  border-radius: 15px;
  background: #eff7f9;
  box-shadow: 0 1px 1px #b6cdd4;
  display: flex;
  align-items: center;
  padding-left: 21px;
  gap: 4px;
  font-size: 13px;
  letter-spacing: -.3px;
}
.apps { display: flex; }
.apps > span { width: 44px; height: 47px; display: flex; justify-content: center; padding-top: 11px; position: relative; }
.run::after, .current::after {
  content: "";
  position: absolute;
  bottom: 5px;
  left: 19px;
  width: 6px;
  height: 3px;
  border-radius: 2px;
  background: #7a8a90;
}
.console { margin-top: 2px; }
.apps > .current { width: 38px; height: 38px; margin: 4px 3px; padding-top: 7px; border-radius: 4px; background: #e9f3f6; box-shadow: 0 0 0 1px #dbe9ed; }
.current::after { left: 11px; bottom: 0; width: 16px; background: #23829b; }
.current b {
  position: absolute;
  left: 20px;
  top: 2px;
  width: 16px;
  height: 16px;
  border-radius: 50%;
  background: #f4511e;
  color: #fff;
  font-size: 9px;
  font-weight: 400;
  line-height: 16px;
  text-align: center;
}
.cmd { font: 700 6px "Liberation Mono", monospace; fill: #fff; }
.tray { margin-left: auto; height: 47px; display: flex; align-items: center; padding-right: 20px; }
.tl, .st { fill: none; stroke: #111; stroke-width: 1.3; }
.sync { margin: 0 10px 0 9px; }
.vol { margin: 0 8px 0 7px; }
.clock { width: 69px; margin: -1px 12px 0 0; display: flex; flex-direction: column; align-items: flex-end; font-size: 12px; line-height: 16px; letter-spacing: -.25px; }
.badge {
  width: 16px;
  height: 16px;
  margin-top: -1px;
  border-radius: 50%;
  background: #14778c;
  color: #fff;
  font-size: 9px;
  font-weight: 400;
  line-height: 16px;
  text-align: center;
}
```
